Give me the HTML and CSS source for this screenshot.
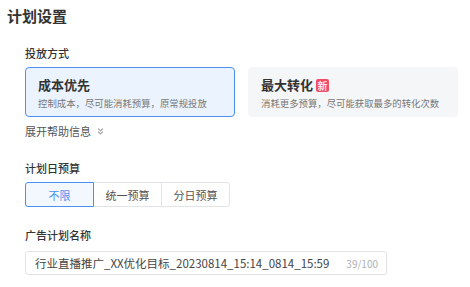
FILE: index.html
```html
<!DOCTYPE html>
<html lang="zh-CN">
<head>
    <meta charset="UTF-8">
    <title>计划设置</title>
    <link rel="stylesheet" href="styles.css">
</head>
<body>
    <h1 class="page-title">计划设置</h1>

    <div class="form">
        <div class="field">
            <div class="label">投放方式</div>
            <div class="cards">
                <div class="card active">
                    <div class="card-title">成本优先</div>
                    <div class="card-desc">控制成本，尽可能消耗预算，原常规投放</div>
                </div>
                <div class="card">
                    <div class="card-title">最大转化 <span class="badge">新</span></div>
                    <div class="card-desc">消耗更多预算，尽可能获取最多的转化次数</div>
                </div>
            </div>
            <div class="expand">
                展开帮助信息
                <svg width="7" height="7" viewBox="0 0 7 7" fill="none" stroke="#666" stroke-width="1">
                    <path d="M1.2 0.8 L3.5 2.8 L5.8 0.8"/>
                    <path d="M1.2 3.8 L3.5 5.8 L5.8 3.8"/>
                </svg>
            </div>
        </div>

        <div class="field budget">
            <div class="label">计划日预算</div>
            <div class="segmented">
                <div class="seg active">不限</div>
                <div class="seg">统一预算</div>
                <div class="seg">分日预算</div>
            </div>
        </div>

        <div class="field name">
            <div class="label">广告计划名称</div>
            <div class="input">
                <span class="input-text">行业直播推广_XX优化目标_20230814_15:14_0814_15:59</span>
                <span class="counter">39/100</span>
            </div>
        </div>
    </div>
</body>
</html>
```

FILE: styles.css
```css
:root {
    --text: #333333;
    --text-secondary: #777777;
    --muted: #b0b0b0;
    --accent: #4a90f0;
    --accent-bg: #eaf3ff;
    --border: #e2e4e8;
    --card-bg: #f5f6f8;
    --badge: #f04d6a;
}

body {
    font-family: "Noto Sans CJK SC", "Noto Sans", sans-serif;
    color: var(--text);
    background: #ffffff;
    margin: 0;
    padding: 5px 7px 0;
}

.page-title {
    font-size: 15px;
    font-weight: 600;
    line-height: 22px;
    margin: 0;
}

.form {
    padding-left: 18px;
}

.field {
    margin-top: 18px;
}

.field.budget {
    margin-top: 21px;
}

.field.name {
    margin-top: 20px;
}

.label {
    font-size: 11px;
    font-weight: 500;
    line-height: 16px;
    margin-bottom: 6px;
}

.field.name .label {
    margin-bottom: 8px;
}

.cards {
    display: flex;
    gap: 13px;
}

.card {
    width: 210px;
    height: 50px;
    box-sizing: border-box;
    padding: 8px 12px 0;
    border: 1px solid transparent;
    border-radius: 4px;
    background: var(--card-bg);
}

.card.active {
    border-color: var(--accent);
    background: var(--accent-bg);
}

.card-title {
    font-size: 13px;
    font-weight: 600;
    line-height: 18px;
    display: flex;
    align-items: center;
    gap: 3px;
}

.badge {
    display: inline-block;
    width: 13px;
    height: 13px;
    line-height: 13px;
    font-size: 10px;
    font-weight: 500;
    text-align: center;
    color: #ffffff;
    background: var(--badge);
    border-radius: 2px;
}

.card-desc {
    font-size: 9.4px;
    line-height: 14px;
    margin-top: 2px;
    white-space: nowrap;
    color: var(--text-secondary);
}

.expand {
    margin-top: 6px;
    font-size: 11px;
    line-height: 16px;
    color: #555555;
    display: flex;
    align-items: center;
    gap: 6px;
}

.segmented {
    display: flex;
    width: 205px;
    height: 25px;
}

.seg {
    flex: 1;
    display: flex;
    align-items: center;
    justify-content: center;
    font-size: 11px;
    color: #555555;
    border: 1px solid var(--border);
    margin-left: -1px;
}

.seg:first-child {
    margin-left: 0;
    border-radius: 3px 0 0 3px;
}

.seg:last-child {
    border-radius: 0 3px 3px 0;
}

.seg.active {
    color: var(--accent);
    border-color: var(--accent);
    background: #f3f8ff;
    position: relative;
}

.input {
    width: 362px;
    height: 24px;
    box-sizing: border-box;
    border: 1px solid var(--border);
    border-radius: 3px;
    display: flex;
    align-items: center;
    justify-content: space-between;
    padding: 0 8px 0 9px;
}

.input-text {
    font-size: 11.5px;
    color: #444444;
}

.counter {
    font-size: 10px;
    color: var(--muted);
}
```
